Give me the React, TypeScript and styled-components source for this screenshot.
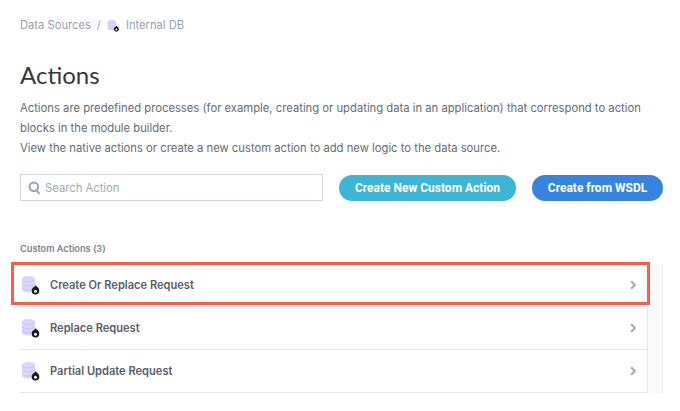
import React from "react";
import styled, { createGlobalStyle } from "styled-components";

const Global = createGlobalStyle`
  html, body { margin: 0; padding: 0; background: #fff; }
  body { font-family: Inter, "Liberation Sans", sans-serif; overflow: hidden; }
`;

const Page = styled.div`
  width: 680px;
  height: 411px;
  box-sizing: border-box;
  padding: 18px 17px 0 20px;
  overflow: hidden;
`;

const Breadcrumb = styled.nav`
  display: flex;
  align-items: center;
  height: 14px;
  font-size: 11.2px;
  color: #98a1b3;
`;

const Slash = styled.span`
  margin: 0 6px;
`;

const CrumbIcon = styled.span`
  display: flex;
  margin-right: 6px;
`;

const Title = styled.h1`
  margin: 27px 0 0;
  font-family: Lato, sans-serif;
  font-weight: 400;
  font-size: 24px;
  line-height: 32px;
  color: #33383f;
`;

const Description = styled.p`
  margin: 7px 0 0;
  font-size: 11.25px;
  line-height: 20px;
  white-space: nowrap;
  color: #646b78;
`;

const Toolbar = styled.div`
  display: flex;
  align-items: center;
  margin-top: 16px;
`;

const SearchBox = styled.label`
  display: flex;
  align-items: center;
  gap: 4px;
  box-sizing: border-box;
  width: 303px;
  height: 27px;
  padding: 0 7px;
  border: 1px solid #d0d6df;
  color: #a3abb9;
  font-size: 11.25px;
`;

const Button = styled.button<{ $color: string; $width: number }>`
  height: 26px;
  width: ${(p) => p.$width}px;
  border: 0;
  border-radius: 13px;
  background: ${(p) => p.$color};
  color: #fff;
  font-family: Roboto, sans-serif;
  font-weight: 700;
  font-size: 12px;
  padding: 0;
`;

const PrimaryButton = styled(Button)`
  margin-left: 16px;
`;

const SectionLabel = styled.div`
  margin-top: 42px;
  font-size: 9.2px;
  line-height: 12px;
  font-weight: 600;
  color: #7b8494;
`;

const ListArea = styled.div`
  position: relative;
  display: flex;
  margin-top: 9px;
`;

const List = styled.div`
  width: 629px;
  box-sizing: border-box;
  border-right: 1px solid #e6e7ec;
`;

const Track = styled.div`
  width: 14px;
  background: #f9f9f9;
  border-right: 1px solid #ececec;
`;

const Row = styled.div`
  display: flex;
  align-items: center;
  box-sizing: border-box;
  height: 43px;
  padding: 0 10px 0 1px;
  border-bottom: 1px solid #e6e7ec;
`;

const RowName = styled.span`
  flex: 1;
  margin-left: 9px;
  font-size: 11.1px;
  font-weight: 600;
  color: #575d6b;
`;

const Highlight = styled.div`
  position: absolute;
  left: -9px;
  top: -2px;
  width: 639px;
  height: 43px;
  box-sizing: border-box;
  border: 3px solid #ff5a4e;
`;

const DbIcon = ({ size }: { size: number }) => (
  <svg width={size} height={size} viewBox="0 0 20 20" aria-hidden="true">
    <path d="M1 3.700C1 2.100 4 1 7.500 1S14 2.100 14 3.700v11c0 1.600-3 2.800-6.500 2.800S1 16.300 1 14.700Z" fill="#dcd6fa" />
    <path d="M1 4.500c1 1.500 3.800 2.300 6.500 2.300S13 6 14 4.500M1 8.500c1 1.500 3.800 2.300 6.500 2.300S13 10 14 8.500M1 12.500c1 1.500 3.800 2.300 6.500 2.300S13 14 14 12.500" fill="none" stroke="#c7bff0" strokeWidth="0.800" />
    <circle cx="14.500" cy="15.700" r="3.800" fill="#17171b" />
    <path d="M14.700 10c.6 1.500 1.900 2.100 2.600 3.500h-5.600c.7-1.200 2.400-1.800 3-3.500Z" fill="#17171b" />
    <circle cx="14.500" cy="16.200" r="1.500" fill="#fff" />
  </svg>
);

const Chevron = () => (
  <svg width="7" height="10" viewBox="0 0 7 10" aria-hidden="true">
    <path d="M1.200 1.200 4.800 5 1.200 8.800" fill="none" stroke="#a4adbc" strokeWidth="2.200" />
  </svg>
);

const SearchIcon = () => (
  <svg width="13" height="14" viewBox="0 0 13 14" aria-hidden="true">
    <circle cx="5.800" cy="5.800" r="4.300" fill="none" stroke="#9aa3b2" strokeWidth="2" />
    <path d="M8.500 9 11.500 13" stroke="#9aa3b2" strokeWidth="2" />
  </svg>
);

const rows = ["Create Or Replace Request", "Replace Request", "Partial Update Request"];

export default function App() {
  return (
    <Page>
      <Global />
      <Breadcrumb>
        Data Sources
        <Slash>/</Slash>
        <CrumbIcon>
          <DbIcon size={13} />
        </CrumbIcon>
        Internal DB
      </Breadcrumb>
      <Title>Actions</Title>
      <Description>
        Actions are predefined processes (for example, creating or updating data in an application) that correspond to action
        <br />
        blocks in the module builder.
        <br />
        View the native actions or create a new custom action to add new logic to the data source.
      </Description>
      <Toolbar>
        <SearchBox>
          <SearchIcon />
          Search Action
        </SearchBox>
        <PrimaryButton $color="#3db5d6" $width={177}>Create New Custom Action</PrimaryButton>
        <PrimaryButton $color="#3585e0" $width={131}>Create from WSDL</PrimaryButton>
      </Toolbar>
      <SectionLabel>Custom Actions (3)</SectionLabel>
      <ListArea>
        <List>
          {rows.map((name) => (
            <Row key={name}>
              <DbIcon size={20} />
              <RowName>{name}</RowName>
              <Chevron />
            </Row>
          ))}
        </List>
        <Track />
        <Highlight />
      </ListArea>
    </Page>
  );
}
